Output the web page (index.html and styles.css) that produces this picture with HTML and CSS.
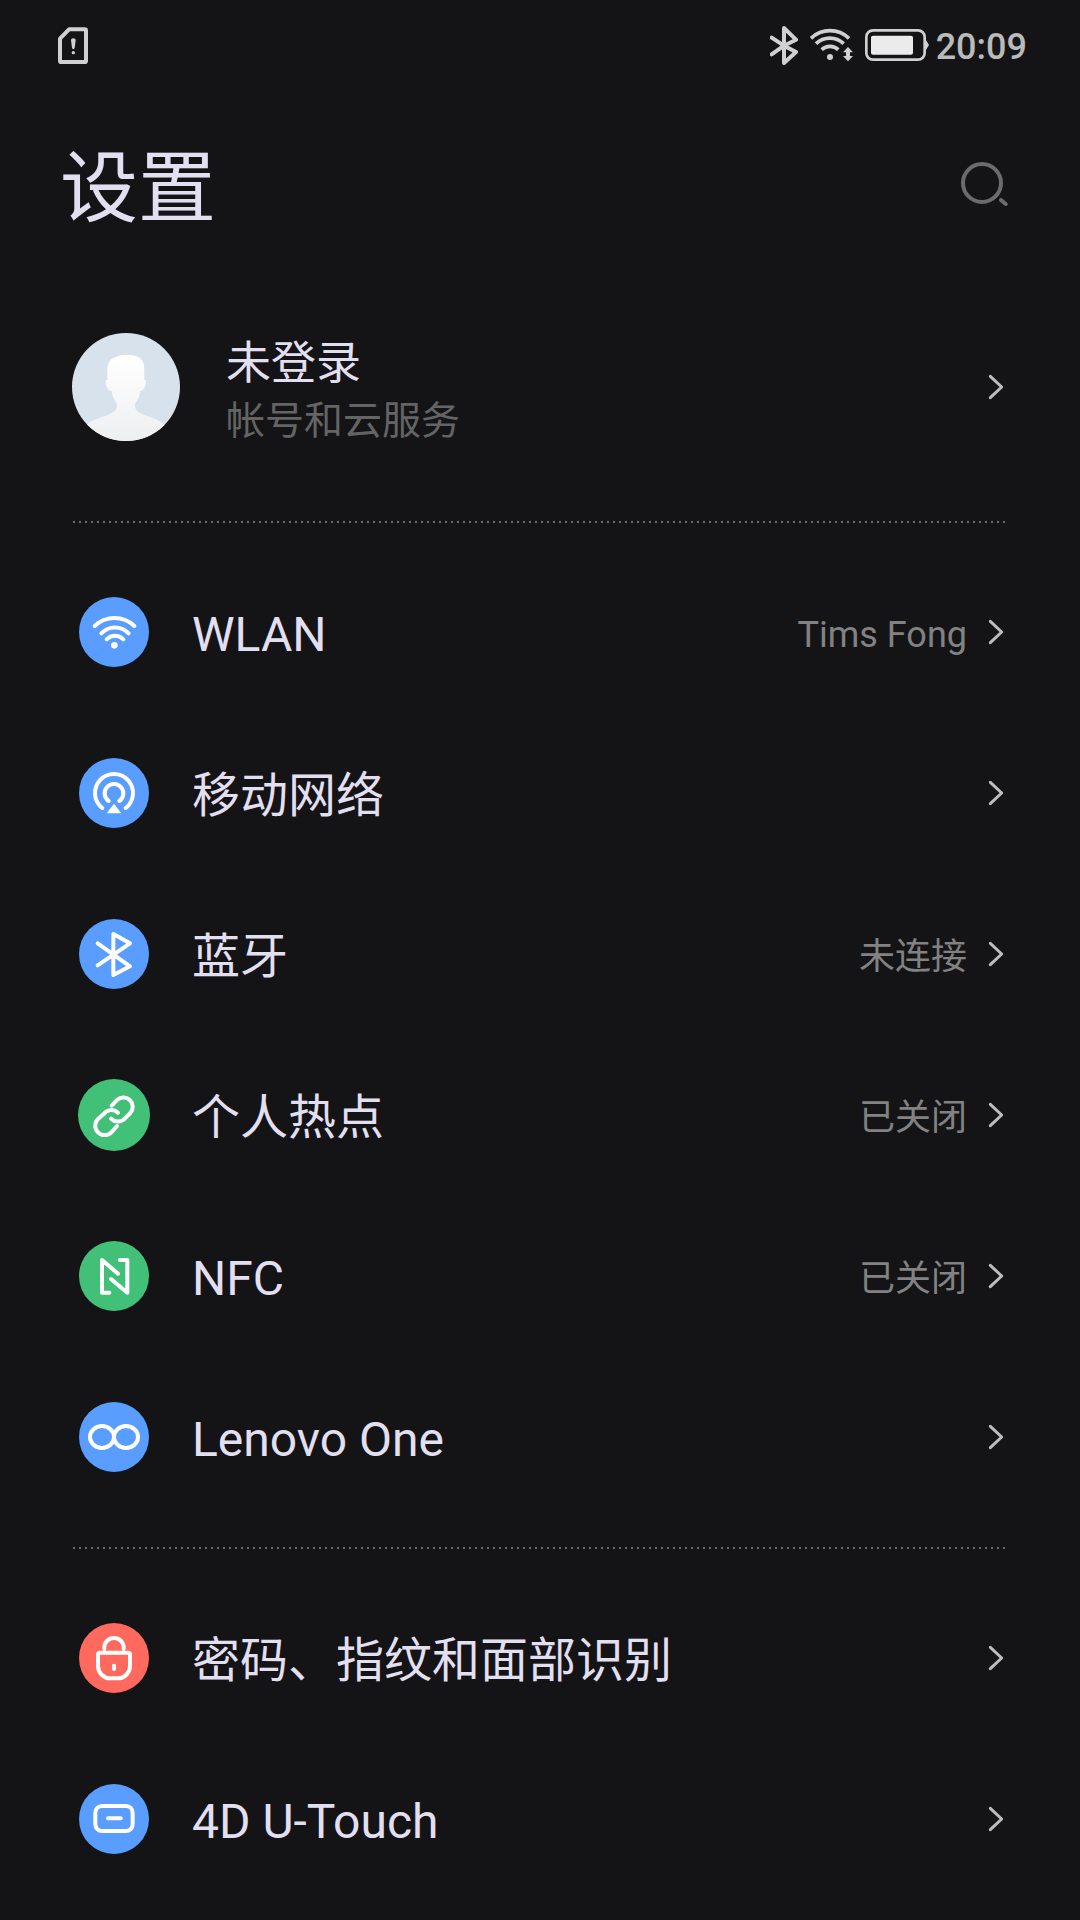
FILE: index.html
```html
<!DOCTYPE html>
<html lang="zh-CN">
<head>
<meta charset="utf-8">
<meta name="viewport" content="width=device-width, initial-scale=1">
<title>设置</title>
<link rel="stylesheet" href="styles.css">
</head>
<body>
<svg class="symbols" aria-hidden="true">
  <symbol id="chevron" viewBox="0 0 48 78">
    <path d="M7 7 L41 39 L7 71" fill="none" stroke="currentColor" stroke-width="9" stroke-linecap="round" stroke-linejoin="round"/>
  </symbol>
</svg>

<div class="status-bar">
  <svg class="status-icon" width="30" height="37" viewBox="0 0 90 111" role="img" aria-label="SIM">
    <path d="M6 35 L33 7 H80 Q84 7 84 11 V101 Q84 105 80 105 H10 Q6 105 6 101 Z" fill="none" stroke="currentColor" stroke-width="12" stroke-linejoin="round"/>
    <path d="M39 39 Q39 34 46 34 Q53 34 53 39 L50 64 Q46 69 42 64 Z" fill="currentColor"/>
    <circle cx="46" cy="77" r="5" fill="currentColor"/>
  </svg>
  <div class="status-right">
    <svg class="status-icon" width="28" height="39" viewBox="0 0 84 117" role="img" aria-label="Bluetooth">
      <path d="M5 35 L42 59 L78 78 L42 111 V6 L78 41 L42 59 L5 85" fill="none" stroke="currentColor" stroke-width="12" stroke-linecap="round" stroke-linejoin="round"/>
    </svg>
    <svg class="status-icon wifi-status" width="43" height="34" viewBox="0 0 129 102" role="img" aria-label="Wi-Fi">
      <g fill="none" stroke="currentColor" stroke-width="11">
        <path d="M3 31 A82 82 0 0 1 117 31"/>
        <path d="M18 47 A60 60 0 0 1 101 47"/>
        <path d="M35 65 A36 36 0 0 1 85 65"/>
      </g>
      <circle cx="60" cy="87" r="9" fill="currentColor"/>
      <path d="M114 57 L129 73 H120 V84 H129 L114 100 L99 84 H108 V73 H99 Z" fill="currentColor"/>
    </svg>
    <svg class="status-icon battery" width="64" height="32" viewBox="0 0 192 96" role="img" aria-label="Battery">
      <rect x="4" y="4" width="175" height="88" rx="20" fill="none" stroke="currentColor" stroke-width="8"/>
      <rect class="battery-level" x="18" y="20" width="126" height="57" rx="6"/>
      <path d="M181 30 L192 48 L181 66 Z" fill="currentColor"/>
    </svg>
    <time class="clock">20:09</time>
  </div>
</div>

<header class="header">
  <h1 class="title">设置</h1>
  <button class="search" type="button" aria-label="搜索">
    <svg width="47" height="44" viewBox="0 0 141 132" fill="none" stroke="currentColor" stroke-width="12" stroke-linecap="round">
      <circle cx="63" cy="63" r="57"/>
      <path d="M120 114 L134 126"/>
    </svg>
  </button>
</header>

<main>
  <a class="account" href="#account">
    <svg class="avatar" width="108" height="108" viewBox="0 0 324 324" aria-hidden="true">
      <defs>
        <linearGradient id="body" x1="0" y1="0" x2="0" y2="1">
          <stop offset="0" stop-color="#ffffff"/>
          <stop offset="1" stop-color="#eeeff1"/>
        </linearGradient>
        <clipPath id="round"><circle cx="162" cy="162" r="162"/></clipPath>
      </defs>
      <g clip-path="url(#round)">
        <rect width="324" height="324" fill="#d8e2ec"/>
        <path d="M40 280 C60 250 135 252 135 218 C135 206 122 200 119 174 C106 173 100 158 101 141 H107 C105 120 105 100 109 92 C116 76 124 76 132 72 C140 65 160 66 170 66 C206 67 217 82 217 110 V141 H222 C223 158 217 173 205 174 C202 200 189 206 189 218 C189 252 258 246 284 282 L324 324 H0 Z" fill="url(#body)"/>
      </g>
    </svg>
    <span class="account-text">
      <span class="account-name">未登录</span>
      <span class="account-note">帐号和云服务</span>
    </span>
    <svg class="chevron" width="16" height="26" aria-hidden="true"><use href="#chevron"/></svg>
  </a>

  <hr class="divider">

  <ul class="list">
    <li><a class="row" href="#wlan">
      <svg class="icon" viewBox="0 0 216 216" aria-hidden="true">
        <circle class="blue" cx="108" cy="108" r="105"/>
        <path d="M50 90 A86 86 0 0 1 169 90 M70 112 A56 56 0 0 1 152 112 M86 130 A34 34 0 0 1 136 130"/>
        <circle class="solid" cx="109" cy="148" r="10"/>
      </svg>
      <span class="label">WLAN</span>
      <span class="value">Tims Fong</span>
      <svg class="chevron" width="16" height="26" aria-hidden="true"><use href="#chevron"/></svg>
    </a></li>
    <li><a class="row" href="#mobile">
      <svg class="icon" viewBox="0 0 216 216" aria-hidden="true">
        <circle class="blue" cx="108" cy="108" r="105"/>
        <path d="M73 153 A57 57 0 1 1 143 153 M92 132 A28 28 0 1 1 124 132"/>
        <path class="solid" d="M108 140 L130 169 H86 Z"/>
      </svg>
      <span class="label">移动网络</span>
      <svg class="chevron" width="16" height="26" aria-hidden="true"><use href="#chevron"/></svg>
    </a></li>
    <li><a class="row" href="#bluetooth">
      <svg class="icon" viewBox="0 0 216 216" aria-hidden="true">
        <circle class="blue" cx="108" cy="108" r="105"/>
        <path d="M59 76 L156 145 L106 171 V48 L156 76 L59 142"/>
      </svg>
      <span class="label">蓝牙</span>
      <span class="value">未连接</span>
      <svg class="chevron" width="16" height="26" aria-hidden="true"><use href="#chevron"/></svg>
    </a></li>
    <li><a class="row" href="#hotspot">
      <svg class="icon" viewBox="0 0 216 216" aria-hidden="true">
        <circle class="green" cx="108" cy="108" r="108"/>
        <path d="M101 80 L118 62 A28 28 0 0 1 157 102 L143 116 A29 29 0 0 1 99 119 M120 101 A29 29 0 0 0 77 105 L60 120 A28 28 0 0 0 100 160 L117 141"/>
      </svg>
      <span class="label">个人热点</span>
      <span class="value">已关闭</span>
      <svg class="chevron" width="16" height="26" aria-hidden="true"><use href="#chevron"/></svg>
    </a></li>
    <li><a class="row" href="#nfc">
      <svg class="icon" viewBox="0 0 216 216" aria-hidden="true">
        <circle class="green" cx="108" cy="108" r="105"/>
        <path d="M94 158 H72 V60 L120 101 M126 60 H148 V158 L99 117"/>
      </svg>
      <span class="label">NFC</span>
      <span class="value">已关闭</span>
      <svg class="chevron" width="16" height="26" aria-hidden="true"><use href="#chevron"/></svg>
    </a></li>
    <li><a class="row" href="#lenovo-one">
      <svg class="icon" viewBox="0 0 216 216" aria-hidden="true">
        <circle class="blue" cx="108" cy="108" r="105"/>
        <ellipse class="ring" cx="72" cy="108" rx="36" ry="33"/>
        <ellipse class="ring" cx="144" cy="108" rx="36" ry="33"/>
      </svg>
      <span class="label">Lenovo One</span>
      <svg class="chevron" width="16" height="26" aria-hidden="true"><use href="#chevron"/></svg>
    </a></li>
  </ul>

  <hr class="divider">

  <ul class="list">
    <li><a class="row" href="#security">
      <svg class="icon" viewBox="0 0 216 216" aria-hidden="true">
        <circle class="red" cx="108" cy="108" r="105"/>
        <path d="M79 80 V76 A29 28 0 0 1 137 76 V80 M66 92 H150 Q156 92 156 98 V132 A37 37 0 0 1 119 169 H97 A37 37 0 0 1 60 132 V98 Q60 92 66 92 Z M108 131 V141"/>
      </svg>
      <span class="label">密码、指纹和面部识别</span>
      <svg class="chevron" width="16" height="26" aria-hidden="true"><use href="#chevron"/></svg>
    </a></li>
    <li><a class="row" href="#u-touch">
      <svg class="icon" viewBox="0 0 216 216" aria-hidden="true">
        <circle class="blue" cx="108" cy="108" r="105"/>
        <rect class="ring" x="52" y="69" width="112" height="75" rx="20"/>
        <path d="M90 106 H128"/>
      </svg>
      <span class="label">4D U-Touch</span>
      <svg class="chevron" width="16" height="26" aria-hidden="true"><use href="#chevron"/></svg>
    </a></li>
  </ul>
</main>
</body>
</html>
```
FILE: styles.css
```css
* {
  box-sizing: border-box;
}

body {
  margin: 0;
  background: #141416;
  color: #e2dff0;
  font-family: Roboto, "Noto Sans CJK SC", sans-serif;
}

.symbols {
  display: none;
}

a {
  color: inherit;
  text-decoration: none;
}

.status-bar {
  display: flex;
  align-items: center;
  justify-content: space-between;
  height: 90px;
  padding: 0 53px 0 58px;
  color: #d0d0d0;
}

.status-right {
  display: flex;
  align-items: center;
}

.status-icon {
  flex: none;
}

.wifi-status {
  margin-left: 12px;
}

.battery {
  margin: 0 7px 0 12px;
}

.battery-level {
  fill: #ebebeb;
}

.clock {
  padding-top: 4px;
  color: #bababa;
  font-size: 36px;
  font-weight: 500;
  line-height: 44px;
}

.header {
  display: flex;
  align-items: center;
  justify-content: space-between;
  height: 188px;
  margin-bottom: 4px;
  padding: 0 72px 0 60px;
}

.title {
  margin: 0;
  padding-top: 12px;
  font-size: 78px;
  font-weight: 400;
  line-height: 96px;
}

.search {
  display: flex;
  padding: 0;
  border: 0;
  background: none;
  color: #6b6b6b;
}

.account {
  display: flex;
  align-items: center;
  height: 210px;
  padding: 0 76px 0 72px;
}

.avatar {
  flex: none;
}

.account-text {
  display: flex;
  flex: 1;
  flex-direction: column;
  margin-left: 46px;
  padding-top: 10px;
}

.account-name {
  font-size: 45px;
  line-height: 58px;
}

.account-note {
  color: #646464;
  font-size: 39px;
  line-height: 56px;
}

.divider {
  height: 2px;
  margin: 29px 74px 29px 73px;
  border: 0;
  background: repeating-linear-gradient(90deg, #6a6a6c 0 2px, transparent 2px 6px);
}

.list {
  margin: 0;
  padding: 0;
  list-style: none;
}

.row {
  display: flex;
  align-items: center;
  height: 161px;
  padding: 0 76px 2px 78px;
}

.icon {
  flex: none;
  width: 72px;
  height: 72px;
  margin-right: 42px;
  fill: none;
  stroke: #fff;
  stroke-width: 12;
  stroke-linecap: round;
  stroke-linejoin: round;
}

.icon .blue {
  fill: #589dff;
  stroke: none;
}

.icon .green {
  fill: #43c078;
  stroke: none;
}

.icon .red {
  fill: #ff695e;
  stroke: none;
}

.icon .solid {
  fill: #fff;
  stroke: none;
}

.label {
  flex: 1;
  padding-top: 7px;
  font-size: 48px;
  line-height: 60px;
}

.value {
  padding-top: 7px;
  color: #828282;
  font-size: 36px;
  line-height: 60px;
}

.chevron {
  flex: none;
  margin-left: 21px;
  color: #bdbdbd;
}
```
